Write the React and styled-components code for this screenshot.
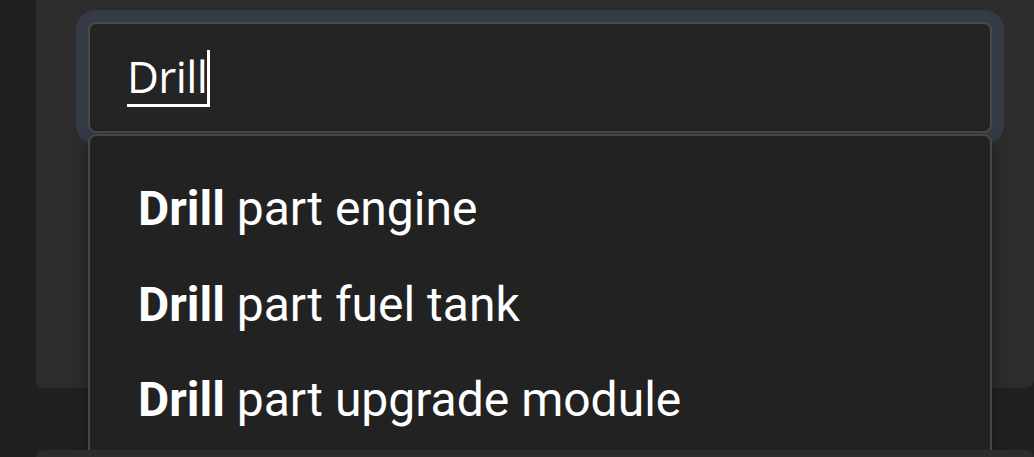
import styled, { createGlobalStyle } from 'styled-components';

const GlobalStyle = createGlobalStyle`
  html, body {
    margin: 0;
    padding: 0;
    background: #202020;
    overflow: hidden;
  }
  body {
    font-family: Roboto, "Liberation Sans", sans-serif;
  }
`;

const Page = styled.div`
  display: flex;
  flex-direction: column;
  gap: 62px;
  padding-left: 36px;
  height: 457px;
  overflow: hidden;
`;

const Card = styled.div`
  position: relative;
  flex-shrink: 0;
  background: #2c2c2c;
  border-radius: ${({ $top }) => ($top ? '0 0 8px 8px' : '8px 8px 0 0')};
  height: ${({ $height }) => $height}px;
  padding: 22px 0 0 52px;
  box-sizing: border-box;
`;

const Combo = styled.div`
  position: relative;
  width: 904px;
`;

const InputBox = styled.div`
  box-sizing: border-box;
  height: 111px;
  background: #242424;
  border: 2px solid #4a4a4a;
  border-radius: 8px;
  box-shadow: 0 0 0 12px #343b46;
  padding: 26px 0 0 37px;
  display: flex;
  align-items: flex-start;
`;

const Typed = styled.span`
  display: inline-block;
  font-family: "Open Sans", "Noto Sans", sans-serif;
  font-size: 44px;
  letter-spacing: -0.6px;
  line-height: 45px;
  color: #ffffff;
  padding-top: 4px;
  padding-bottom: 5px;
  border-bottom: 3px solid #ffffff;
  border-right: 3px solid #ffffff;
`;

const Menu = styled.ul`
  position: absolute;
  top: 112px;
  left: 0;
  width: 904px;
  height: 400px;
  box-sizing: border-box;
  margin: 0;
  padding: 25px 0 0 48px;
  list-style: none;
  background: #222222;
  border: 2px solid #474747;
  border-radius: 8px 8px 0 0;
  box-shadow: 0 4px 14px rgba(0, 0, 0, 0.35);
`;

const Option = styled.li`
  font-size: 48px;
  line-height: 95.5px;
  color: #ffffff;
  white-space: nowrap;

  b {
    font-weight: 700;
  }
`;

const options = ['part engine', 'part fuel tank', 'part upgrade module'];

export default function App() {
  const query = 'Drill';

  return (
    <>
      <GlobalStyle />
      <Page>
        <Card $top $height={388}>
          <Combo>
            <InputBox>
              <Typed>{query}</Typed>
            </InputBox>
            <Menu>
              {options.map((rest) => (
                <Option key={rest}>
                  <b>{query}</b> {rest}
                </Option>
              ))}
            </Menu>
          </Combo>
        </Card>
        <Card $height={100} />
      </Page>
    </>
  );
}
